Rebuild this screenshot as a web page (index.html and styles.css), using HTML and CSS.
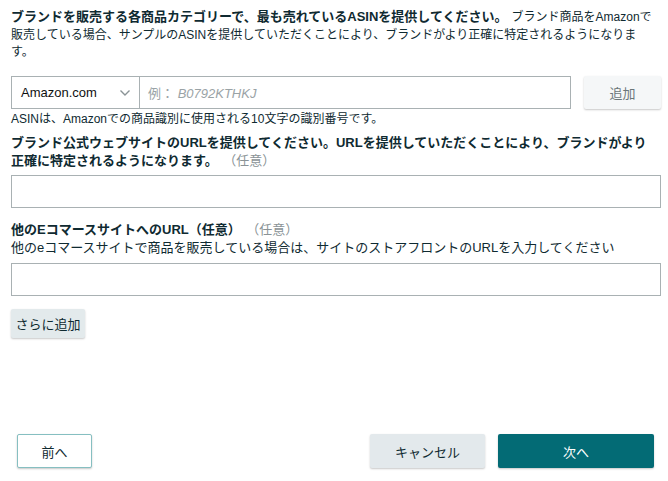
FILE: index.html
```html
<!DOCTYPE html>
<html lang="ja">
<head>
<meta charset="utf-8">
<link rel="stylesheet" href="styles.css">
</head>
<body>
<div class="page">
  <form class="form">
    <p class="intro"><strong class="lead">ブランドを販売する各商品カテゴリーで、最も売れているASINを提供してください。</strong><span class="intro-body">ブランド商品をAmazonで販売している場合、サンプルのASINを提供していただくことにより、ブランドがより正確に特定されるようになります。</span></p>

    <div class="asin-row">
      <div class="combo">
        <div class="select">
          <span>Amazon.com</span>
          <svg class="chev" width="12" height="8" viewBox="0 0 12 8"><path d="M1.5 1.5 6 6l4.5-4.5" fill="none" stroke="#8a9396" stroke-width="1.4"/></svg>
        </div>
        <div class="asin-input"><span class="ph">例： <i>B0792KTHKJ</i></span></div>
      </div>
      <button type="button" class="btn btn-add">追加</button>
    </div>
    <p class="hint">ASINは、Amazonでの商品識別に使用される10文字の識別番号です。</p>

    <label class="label label-2">ブランド公式ウェブサイトのURLを提供してください。URLを提供していただくことにより、ブランドがより正確に特定されるようになります。<span class="opt">（任意）</span></label>
    <div class="field"></div>

    <label class="label label-3">他のEコマースサイトへのURL（任意）<span class="opt">（任意）</span></label>
    <p class="desc">他のeコマースサイトで商品を販売している場合は、サイトのストアフロントのURLを入力してください</p>
    <div class="field"></div>

    <button type="button" class="btn btn-more">さらに追加</button>
  </form>

  <div class="footer">
    <button type="button" class="btn btn-back">前へ</button>
    <div class="footer-right">
      <button type="button" class="btn btn-cancel">キャンセル</button>
      <button type="button" class="btn btn-next">次へ</button>
    </div>
  </div>
</div>
</body>
</html>
```

FILE: styles.css
```css
html, body {
  margin: 0;
  padding: 0;
  background: #ffffff;
}

body {
  font-family: "Liberation Sans", "Noto Sans CJK JP", sans-serif;
  color: #0f2a31;
  width: 668px;
  height: 481px;
  overflow: hidden;
}

.page {
  display: flex;
  flex-direction: column;
  height: 481px;
}

.form {
  padding: 0 7px 0 11px;
  display: flex;
  flex-direction: column;
  align-items: flex-start;
}

.intro {
  margin: 8px 0 0;
  max-width: 643px;
  font-size: 12px;
  line-height: 17.5px;
}

.lead {
  font-size: 13px;
  font-weight: bold;
  margin-right: 4px;
}

.asin-row {
  margin-top: 14px;
  display: flex;
  align-items: stretch;
  width: 100%;
  gap: 13px;
}

.combo {
  flex: 1;
  display: flex;
  height: 33px;
  border: 1px solid #a9b1b3;
  box-sizing: border-box;
}

.select {
  width: 128px;
  box-sizing: border-box;
  border-right: 1px solid #a9b1b3;
  display: flex;
  align-items: center;
  justify-content: space-between;
  padding: 0 8px 0 9px;
  font-size: 13px;
  color: #0f1111;
}

.chev {
  margin-top: 1px;
}

.asin-input {
  flex: 1;
  display: flex;
  align-items: center;
  padding-left: 8px;
  font-size: 13px;
}

.ph {
  color: #9aa3a6;
}

.ph i {
  font-style: italic;
}

.btn {
  font-family: "Liberation Sans", "Noto Sans CJK JP", sans-serif;
  font-size: 13px;
  border: none;
  border-radius: 2px;
  padding: 0;
  white-space: nowrap;
  cursor: pointer;
  box-shadow: 0 1px 2px rgba(0, 0, 0, 0.22);
  color: #0f2a31;
}

.btn-add {
  width: 77px;
  height: 33px;
  background: #f5f7f8;
  color: #6b7679;
}

.hint {
  margin: 2px 0 0;
  font-size: 12px;
  line-height: 16px;
}

.label {
  display: block;
  font-size: 13px;
  font-weight: bold;
  line-height: 18px;
}

.label-2 {
  margin-top: 7px;
  max-width: 640px;
}

.label-3 {
  margin-top: 13px;
}

.opt {
  font-weight: normal;
  color: #8a9396;
  margin-left: 12px;
}

.desc {
  margin: 0;
  font-size: 13px;
  line-height: 17px;
}

.field {
  margin-top: 5px;
  width: 100%;
  height: 33px;
  border: 1px solid #a9b1b3;
  box-sizing: border-box;
}

.desc + .field {
  margin-top: 7px;
}

.btn-more {
  margin-top: 13px;
  width: 74px;
  height: 29px;
  background: #e3eaec;
}

.footer {
  margin-top: auto;
  margin-bottom: 13px;
  padding: 0 14px 0 17px;
  display: flex;
  justify-content: space-between;
  align-items: center;
}

.footer-right {
  display: flex;
  gap: 13px;
}

.btn-back {
  width: 75px;
  height: 34px;
  background: #ffffff;
  border: 1px solid #86bfc1;
}

.btn-cancel {
  width: 115px;
  height: 34px;
  background: #e3e9ec;
}

.btn-next {
  width: 156px;
  height: 34px;
  background: #036b75;
  color: #ffffff;
}
```
